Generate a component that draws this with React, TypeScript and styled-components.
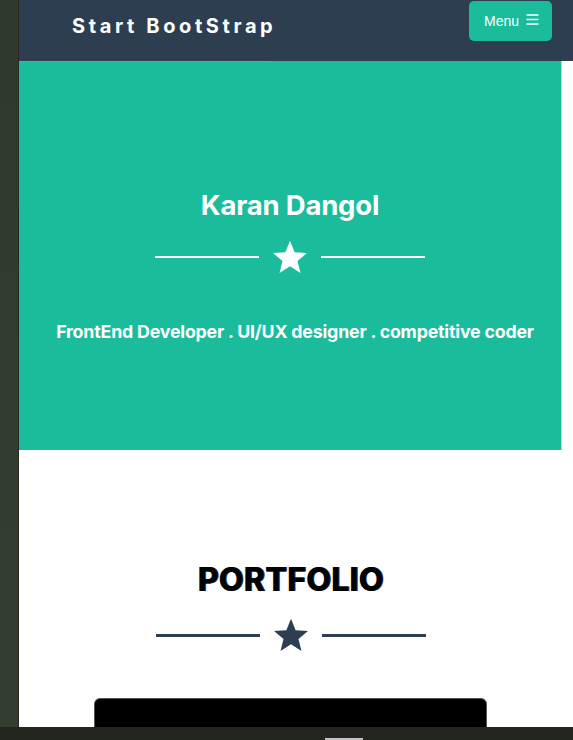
import React from "react";
import styled, { createGlobalStyle } from "styled-components";

const Global = createGlobalStyle`
  html, body { margin: 0; padding: 0; }
  body { background: #2f3a2b; font-family: "Inter", "Open Sans", sans-serif; }
`;

const Frame = styled.div`
  height: 740px;
  overflow: hidden;
  display: grid;
  grid-template-rows: 727px 13px;
`;

const Screen = styled.div`
  display: grid;
  grid-template-columns: 19px 1fr;
  overflow: hidden;
`;

const Strip = styled.div`
  background: linear-gradient(180deg, #2f3a2b, #323f2e);
  border-right: 1px solid #2a2622;
`;

const Page = styled.div`
  background: #ffffff;
  overflow: hidden;
  display: flex;
  flex-direction: column;
`;

const Nav = styled.nav`
  height: 61px;
  flex: none;
  background: #2d3e50;
  display: flex;
  align-items: flex-start;
  justify-content: space-between;
  padding: 0 21px 0 53px;
`;

const Brand = styled.div`
  margin-top: 14px;
  color: #ffffff;
  font-family: "Inter", sans-serif;
  font-weight: 700;
  font-size: 20px;
  letter-spacing: 3.6px;
`;

const MenuButton = styled.button`
  margin-top: 1px;
  width: 83px;
  height: 40px;
  border: none;
  border-radius: 5px;
  background: #1abc9c;
  color: #ffffff;
  font-family: "Liberation Sans", Arial, sans-serif;
  font-size: 14px;
  display: flex;
  align-items: center;
  justify-content: center;
  gap: 7px;
  padding: 0 0 0 2px;
  & > svg {
    margin-top: -4px;
  }
`;

const Hero = styled.header`
  position: relative;
  width: 543px;
  height: 389px;
  flex: none;
  background: #1abc9c;
  border-right: 1px solid #9fe8d8;
  box-sizing: border-box;
  display: flex;
  flex-direction: column;
  align-items: center;
  color: #ffffff;
  &::before {
    content: "";
    position: absolute;
    left: 0;
    top: 0;
    width: 252px;
    height: 1px;
    background: #5fa9a0;
  }
`;

const HeroTitle = styled.h1`
  margin: 128px 0 0;
  font-family: "Inter", sans-serif;
  font-weight: 700;
  font-size: 27.5px;
  line-height: 32px;
  letter-spacing: -0.2px;
`;

const Divider = styled.div<{ $color: string; $thick: number }>`
  display: flex;
  align-items: center;
  gap: 13px;
  color: ${(p) => p.$color};
  & > span {
    width: 104px;
    height: ${(p) => p.$thick}px;
    background: ${(p) => p.$color};
  }
`;

const HeroDivider = styled(Divider)`
  margin-top: 18px;
`;

const Subtitle = styled.p`
  margin: 46px 0 0;
  font-family: "Inter", sans-serif;
  font-weight: 700;
  font-size: 17.8px;
  line-height: 22px;
  letter-spacing: -0.2px;
  white-space: nowrap;
  padding-left: 10px;
`;

const Section = styled.section`
  width: 543px;
  display: flex;
  flex-direction: column;
  align-items: center;
`;

const SectionTitle = styled.h2`
  margin: 108px 0 0;
  font-family: "Inter", sans-serif;
  font-weight: 800;
  font-size: 32.4px;
  line-height: 44px;
  color: #000000;
  letter-spacing: 0;
  text-shadow: 1px 0 0 #2a3a55;
`;

const SectionDivider = styled(Divider)`
  margin-top: 15px;
`;

const Card = styled.div`
  margin-top: 45px;
  width: 393px;
  height: 200px;
  background: #000000;
  border-radius: 6px;
  border: 1px solid #555;
  box-sizing: border-box;
`;

const BottomBar = styled.div`
  background: #22261f;
  display: flex;
  align-items: flex-end;
  padding-left: 325px;
`;

const Handle = styled.div`
  width: 38px;
  height: 2px;
  background: #c4c4c4;
`;

const Star = ({ size }: { size: number }) => (
  <svg width={size} height={size} viewBox="0 0 24 24" fill="currentColor">
    <path d="M12 1.2l3.1 7.6 8.2.6-6.3 5.2 2 8-7-4.4-7 4.4 2-8L.7 9.4l8.2-.6z" />
  </svg>
);

const Hamburger = () => (
  <svg width="13" height="11" viewBox="0 0 13 11" fill="none" stroke="#fff" strokeWidth="1.3">
    <path d="M0.5 1h12M0.5 5.5h12M0.5 10h12" />
  </svg>
);

export default function App() {
  return (
    <>
      <Global />
      <Frame>
        <Screen>
          <Strip />
          <Page>
            <Nav>
              <Brand>Start BootStrap</Brand>
              <MenuButton>
                Menu <Hamburger />
              </MenuButton>
            </Nav>
            <Hero>
              <HeroTitle>Karan Dangol</HeroTitle>
              <HeroDivider $color="#ffffff" $thick={2}>
                <span />
                <Star size={36} />
                <span />
              </HeroDivider>
              <Subtitle>FrontEnd Developer . UI/UX designer . competitive coder</Subtitle>
            </Hero>
            <Section>
              <SectionTitle>PORTFOLIO</SectionTitle>
              <SectionDivider $color="#2d3e50" $thick={3}>
                <span />
                <Star size={36} />
                <span />
              </SectionDivider>
              <Card />
            </Section>
          </Page>
        </Screen>
        <BottomBar>
          <Handle />
        </BottomBar>
      </Frame>
    </>
  );
}
